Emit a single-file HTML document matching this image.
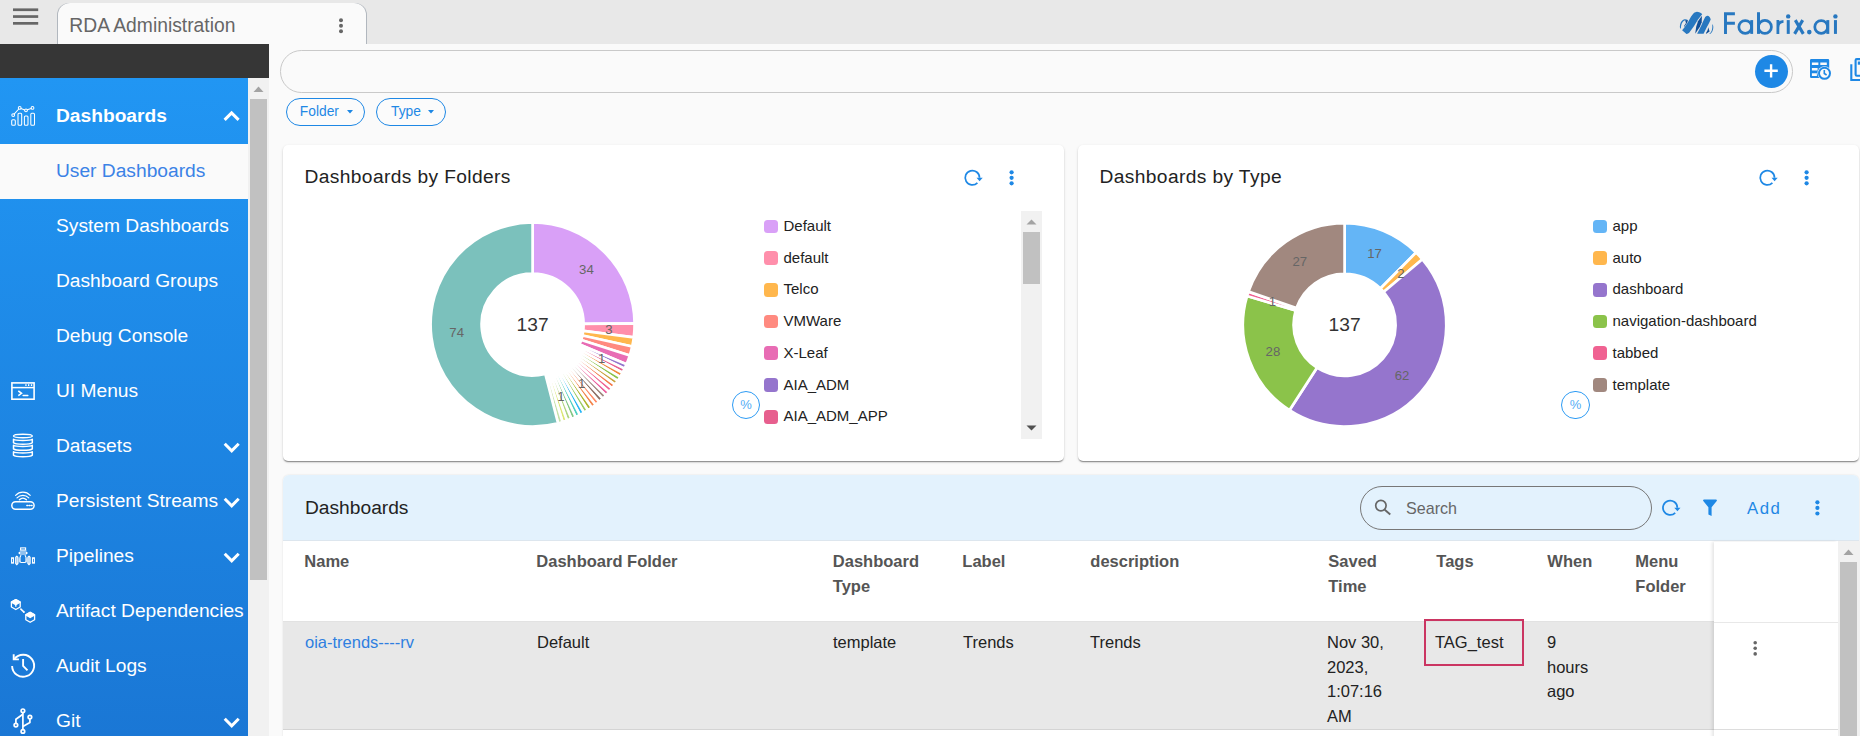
<!DOCTYPE html>
<html><head><meta charset="utf-8"><title>RDA Administration</title>
<style>
*{box-sizing:border-box;margin:0;padding:0}
html,body{width:1860px;height:736px;overflow:hidden;background:#fafafa;font-family:"Liberation Sans",sans-serif;color:#222}
body{position:relative}
.abs{position:absolute}
#topbar{left:0;top:0;width:1860px;height:44px;background:#e8e8e8}
#tab{left:58px;top:3px;width:307.6px;height:41px;background:#fafafa;border-radius:12px 12px 0 0;box-shadow:-1px 0 0 rgba(110,125,140,.45),1px 0 0 rgba(110,125,140,.45)}
#tab span{position:absolute;left:11.3px;top:11.8px;font-size:19.3px;color:#666;white-space:nowrap;line-height:22px}
#dark{left:0;top:44px;width:269px;height:34px;background:#363636}
#side{left:0;top:78px;width:248px;height:658px;background:linear-gradient(#2196f3,#1a77d5)}
#sidescroll{left:248px;top:78px;width:20.6px;height:658px;background:#f1f1f1}
#sidescroll b{position:absolute;left:2px;top:21px;width:17px;height:480.6px;background:#c1c1c1}
.mi{position:absolute;left:56px;font-size:19.2px;color:#fff;white-space:nowrap;line-height:22px}
.lg{position:absolute;font-size:15px;line-height:20px;color:#222;white-space:nowrap;padding-left:19.5px}
.lg i{position:absolute;left:0;top:3.7px;width:14px;height:13.7px;border-radius:3.5px}
.card{position:absolute;background:#fff;border-radius:5px;box-shadow:0 2px 1.5px -1px rgba(0,0,0,.3),0 1px 1px 0 rgba(0,0,0,.16),0 1px 3px 0 rgba(0,0,0,.12)}
.ct{position:absolute;left:21.5px;top:21px;font-size:19.2px;letter-spacing:.38px;line-height:22px;color:#222;white-space:nowrap}
.chip{position:absolute;top:97.7px;height:28.2px;border:1px solid #1e88e5;border-radius:15px;color:#1e88e5;font-size:13.8px;line-height:25px;padding-left:12.8px;background:#fbfbfb}
.pct{position:absolute;width:28.2px;height:28.2px;border:1.2px solid #2d9bf4;border-radius:50%;color:#55acf5;font-size:13px;line-height:26px;text-align:center;background:#fff}
.th{position:absolute;margin-left:-.7px;top:548.5px;font-size:16.5px;font-weight:bold;color:#555;line-height:25px}
.td{position:absolute;top:630px;font-size:16.5px;color:#222;line-height:24.7px}
</style></head><body>

<!-- top bar -->
<div id="topbar" class="abs"></div>
<svg class="abs" style="left:0;top:0" width="50" height="44"><g fill="#666"><rect x="13" y="8.4" width="25.2" height="2.7"/><rect x="13" y="15.2" width="25.2" height="2.7"/><rect x="13" y="22" width="25.2" height="2.7"/></g></svg>
<div id="tab" class="abs"><span>RDA Administration</span>
<svg class="abs" style="left:275px;top:13px" width="16" height="22"><g fill="#666"><circle cx="8" cy="4.2" r="2"/><circle cx="8" cy="9.700" r="2"/><circle cx="8" cy="15.200" r="2"/></g></svg></div>

<!-- logo -->
<svg class="abs" style="left:0;top:0" width="1860" height="44">
<g fill="#2878c0">
<path d="M1682.1 30.200L1686.500 33.900Q1688 34 1689.200 32.800L1693.900 26.300L1698 19.400L1702.200 14.300Q1701.500 12.900 1699.900 12.500Q1697.800 11.700 1696.200 11.900Q1694.400 12.200 1693.400 13.400L1691.100 16.600L1687.900 22.200L1684.200 27.700Z"/>
<path d="M1697.100 33.700H1703.600L1706.300 28.200L1709.100 23.100L1710.700 19.600Q1710.500 17.900 1709.600 16.900Q1708.500 15.700 1707.300 15.800Q1706 16 1705.200 17.100L1703.600 20.300L1701.300 25.400L1698.500 30.900Z"/>
<path d="M1680.200 28.600Q1679.600 26.500 1680.100 24.400Q1680.700 22 1682 20.700Q1683.200 19.500 1684.600 19.200Q1686.200 19 1687.900 19.900L1685.100 20.300Q1683.500 20.900 1682.500 22.200Q1681.500 23.600 1681.200 25.400Q1680.900 27 1680.900 28.600Z"/>
<path d="M1712.600 24.200Q1713.500 25.800 1713.300 27.700Q1713.100 29.700 1712.300 31.400Q1711.500 32.900 1710.500 33.700H1709.100Q1710.200 33.100 1710.900 32.300Q1711.800 30.900 1712.100 29.100Q1712.500 26.800 1712.300 24.500Z"/>
</g>
<g fill="#114f97">
<path d="M1701.900 15.700L1698 21.200L1696.200 26.800L1695.200 33.700L1699.900 26.800L1701.700 22.200Z"/>
<path d="M1685.100 20.300L1687.900 20.100L1687.400 22.200L1684.400 26.800L1683.900 26.300L1686 23.100Z"/>
<path d="M1708.200 27.200L1709.600 31.400L1706.300 33.700L1705.900 33.300L1707.700 30Z"/>
</g>
<g fill="none" stroke="#2878c0">
<path d="M1725.500 33.900V12.200M1724 13.650H1734.900M1725 23.300H1734.900" stroke-width="2.950"/>
<circle cx="1745.250" cy="26.900" r="6.400" stroke-width="2.750"/>
<path d="M1751.700 20.100V33.900" stroke-width="2.850"/>
<path d="M1758.500 12.200V33.900" stroke-width="2.950"/>
<circle cx="1764.900" cy="26.900" r="6.500" stroke-width="2.750"/>
<path d="M1777.900 20.100V33.900M1777.900 27.500Q1778 21.700 1783.500 21.400" stroke-width="2.800"/>
<path d="M1788.250 20.100V33.900" stroke-width="3"/>
<path d="M1795.300 20.100L1803.300 33.900M1802.700 20.100L1794.600 33.900" stroke-width="3.100"/>
<circle cx="1821.200" cy="26.900" r="6.400" stroke-width="2.750"/>
<path d="M1827.800 20.100V33.900" stroke-width="2.950"/>
<path d="M1835.450 20.100V33.900" stroke-width="3"/>
</g>
<g fill="#2878c0"><circle cx="1788.200" cy="16.400" r="2.200"/><circle cx="1809.300" cy="32.100" r="2.300"/><circle cx="1835.400" cy="16.400" r="2.200"/></g>
</svg>

<!-- dark bar + sidebar -->
<div id="dark" class="abs"></div>
<div id="side" class="abs">
 <div class="abs" style="left:0;top:66px;width:248px;height:55px;background:#fafafa"></div>
 <div class="mi" style="top:26.6px;font-weight:bold">Dashboards</div>
 <div class="mi" style="top:81.6px;color:#3b82e6">User Dashboards</div>
 <div class="mi" style="top:136.6px">System Dashboards</div>
 <div class="mi" style="top:191.6px">Dashboard Groups</div>
 <div class="mi" style="top:246.6px">Debug Console</div>
 <div class="mi" style="top:301.6px">UI Menus</div>
 <div class="mi" style="top:356.6px">Datasets</div>
 <div class="mi" style="top:411.6px">Persistent Streams</div>
 <div class="mi" style="top:466.6px">Pipelines</div>
 <div class="mi" style="top:521.6px">Artifact Dependencies</div>
 <div class="mi" style="top:576.6px">Audit Logs</div>
 <div class="mi" style="top:631.6px">Git</div>
 <svg class="abs" style="left:0;top:0" width="248" height="658" fill="none" stroke="#fff">
  <!-- chevrons -->
  <path d="M224.6 41.9l7-7 7 7" stroke-width="3"/>
  <g stroke-width="3"><path d="M224.7 365.800l7 7 7-7"/><path d="M224.700 420.800l7 7 7-7"/><path d="M224.700 475.800l7 7 7-7"/><path d="M224.700 640.800l7 7 7-7"/></g>
 </svg>
</div>
<div id="sidescroll" class="abs"><b></b>
<svg class="abs" style="left:0;top:0" width="21" height="21"><path d="M5.5 14l5-5.5 5 5.5z" fill="#a3a3a3"/></svg></div>

<!-- search row -->
<div class="abs" style="left:280px;top:50px;width:1513px;height:42.6px;border:1px solid #c9c9c9;border-radius:21.3px;background:#fafafa"></div>
<div class="abs" style="left:1755px;top:55px;width:33px;height:33px;border-radius:50%;background:#1e88e5"></div>
<svg class="abs" style="left:1755px;top:55px" width="33" height="33"><path d="M16.1 9.2v13.2M9.4 15.8h13.4" stroke="#fff" stroke-width="2.4"/></svg>

<div class="chip" style="left:286px;width:79px">Folder</div>
<div class="chip" style="left:376px;width:70px;padding-left:14px">Type</div>
<svg class="abs" style="left:280px;top:97px" width="180" height="29"><path d="M67 13h6l-3 3.4zM148 13h6l-3 3.4z" fill="#1e88e5"/></svg>

<!-- cards -->
<div class="card" style="left:283px;top:145px;width:781px;height:316px"><div class="ct">Dashboards by Folders</div></div>
<div class="card" style="left:1078px;top:145px;width:781px;height:316px"><div class="ct">Dashboards by Type</div></div>

<!-- legend scroll box -->
<div class="abs" style="left:1021px;top:211px;width:21px;height:228px;background:#f1f1f1"></div>
<div class="abs" style="left:1023px;top:232px;width:17px;height:52px;background:#c1c1c1"></div>
<svg class="abs" style="left:1021px;top:211px" width="21" height="228"><path d="M5.5 13.5l5-5 5 5z" fill="#a3a3a3"/><path d="M5.5 214.5l5 5 5-5z" fill="#505050"/></svg>

<div class="lg" style="left:764px;top:216.0px"><i style="background:#d9a0f7"></i>Default</div><div class="lg" style="left:764px;top:247.7px"><i style="background:#ff8fab"></i>default</div><div class="lg" style="left:764px;top:279.4px"><i style="background:#ffb74d"></i>Telco</div><div class="lg" style="left:764px;top:311.1px"><i style="background:#ff8a80"></i>VMWare</div><div class="lg" style="left:764px;top:342.8px"><i style="background:#e86cb4"></i>X-Leaf</div><div class="lg" style="left:764px;top:374.5px"><i style="background:#9575cd"></i>AIA_ADM</div><div class="lg" style="left:764px;top:406.2px"><i style="background:#e75f8e"></i>AIA_ADM_APP</div>
<div class="lg" style="left:1593px;top:216.0px"><i style="background:#64b5f6"></i>app</div><div class="lg" style="left:1593px;top:247.7px"><i style="background:#ffb74d"></i>auto</div><div class="lg" style="left:1593px;top:279.4px"><i style="background:#9575cd"></i>dashboard</div><div class="lg" style="left:1593px;top:311.1px"><i style="background:#8bc34a"></i>navigation-dashboard</div><div class="lg" style="left:1593px;top:342.8px"><i style="background:#f06292"></i>tabbed</div><div class="lg" style="left:1593px;top:374.5px"><i style="background:#a1887f"></i>template</div>
<div class="pct" style="left:731.9px;top:390.700px">%</div>
<div class="pct" style="left:1561.4px;top:390.700px">%</div>

<svg class="abs" style="left:0;top:0;font-family:'Liberation Sans',sans-serif" width="1860" height="736">
<g stroke="#fff" stroke-width="2.7" stroke-linejoin="bevel"><path d="M532.60 222.50A102 102 0 0 1 634.59 323.33L583.60 323.92A51 51 0 0 0 532.60 273.50Z" fill="#d9a0f7"/><path d="M634.59 323.33A102 102 0 0 1 633.79 337.33L583.19 330.92A51 51 0 0 0 583.60 323.92Z" fill="#ff8fab"/><path d="M633.79 337.33A102 102 0 0 1 632.19 346.55L582.39 335.52A51 51 0 0 0 583.19 330.92Z" fill="#ffb74d"/><path d="M632.19 346.55A102 102 0 0 1 629.75 355.57L581.18 340.04A51 51 0 0 0 582.39 335.52Z" fill="#ff8a80"/><path d="M629.75 355.57A102 102 0 0 1 626.50 364.34L579.55 344.42A51 51 0 0 0 581.18 340.04Z" fill="#e86cb4"/><path d="M626.50 364.34A102 102 0 0 1 624.57 368.61L578.59 346.55A51 51 0 0 0 579.55 344.42Z" fill="#9575cd"/><path d="M624.57 368.61A102 102 0 0 1 622.45 372.78L577.53 348.64A51 51 0 0 0 578.59 346.55Z" fill="#e75f8e"/><path d="M622.45 372.78A102 102 0 0 1 620.14 376.84L576.37 350.67A51 51 0 0 0 577.53 348.64Z" fill="#ef8a3c"/><path d="M620.14 376.84A102 102 0 0 1 617.65 380.80L575.13 352.65A51 51 0 0 0 576.37 350.67Z" fill="#8bc34a"/><path d="M617.65 380.80A102 102 0 0 1 614.98 384.64L573.79 354.57A51 51 0 0 0 575.13 352.65Z" fill="#c9a13b"/><path d="M614.98 384.64A102 102 0 0 1 612.14 388.36L572.37 356.43A51 51 0 0 0 573.79 354.57Z" fill="#f4794a"/><path d="M612.14 388.36A102 102 0 0 1 609.13 391.94L570.86 358.22A51 51 0 0 0 572.37 356.43Z" fill="#f06292"/><path d="M609.13 391.94A102 102 0 0 1 605.95 395.37L569.28 359.94A51 51 0 0 0 570.86 358.22Z" fill="#ec5f9d"/><path d="M605.95 395.37A102 102 0 0 1 602.63 398.66L567.61 361.58A51 51 0 0 0 569.28 359.94Z" fill="#a1887f"/><path d="M602.63 398.66A102 102 0 0 1 599.15 401.79L565.88 363.15A51 51 0 0 0 567.61 361.58Z" fill="#8d6e63"/><path d="M599.15 401.79A102 102 0 0 1 595.54 404.76L564.07 364.63A51 51 0 0 0 565.88 363.15Z" fill="#ff8a65"/><path d="M595.54 404.76A102 102 0 0 1 591.79 407.57L562.20 366.03A51 51 0 0 0 564.07 364.63Z" fill="#f4844a"/><path d="M591.79 407.57A102 102 0 0 1 587.92 410.19L560.26 367.35A51 51 0 0 0 562.20 366.03Z" fill="#afb42b"/><path d="M587.92 410.19A102 102 0 0 1 583.94 412.64L558.27 368.57A51 51 0 0 0 560.26 367.35Z" fill="#9ccc65"/><path d="M583.94 412.64A102 102 0 0 1 579.84 414.90L556.22 369.70A51 51 0 0 0 558.27 368.57Z" fill="#29b6f6"/><path d="M579.84 414.90A102 102 0 0 1 575.65 416.97L554.12 370.74A51 51 0 0 0 556.22 369.70Z" fill="#4dd0c1"/><path d="M575.65 416.97A102 102 0 0 1 571.36 418.85L551.98 371.67A51 51 0 0 0 554.12 370.74Z" fill="#81c784"/><path d="M571.36 418.85A102 102 0 0 1 567.00 420.53L549.80 372.51A51 51 0 0 0 551.98 371.67Z" fill="#aed581"/><path d="M567.00 420.53A102 102 0 0 1 562.56 422.00L547.58 373.25A51 51 0 0 0 549.80 372.51Z" fill="#dce775"/><path d="M562.56 422.00A102 102 0 0 1 558.06 423.27L545.33 373.89A51 51 0 0 0 547.58 373.25Z" fill="#c5e1a5"/><path d="M558.06 423.27A102 102 0 1 1 532.60 222.50L532.60 273.50A51 51 0 1 0 545.33 373.89Z" fill="#7bc1bc"/></g><text x="586.4" y="273.5" text-anchor="middle" font-size="13.2" fill="#666">34</text><text x="609.0" y="333.6" text-anchor="middle" font-size="13.2" fill="#666">3</text><text x="601.7" y="362.5" text-anchor="middle" font-size="13.2" fill="#666">1</text><text x="581.7" y="387.8" text-anchor="middle" font-size="13.2" fill="#666">1</text><text x="561.0" y="400.7" text-anchor="middle" font-size="13.2" fill="#666">1</text><text x="456.7" y="337.3" text-anchor="middle" font-size="13.2" fill="#666">74</text>
<g stroke="#fff" stroke-width="2.7" stroke-linejoin="bevel"><path d="M1344.60 223.10A101.7 101.7 0 0 1 1416.10 252.48L1380.46 288.53A51 51 0 0 0 1344.60 273.80Z" fill="#64b5f6"/><path d="M1416.10 252.48A101.7 101.7 0 0 1 1422.42 259.33L1383.63 291.97A51 51 0 0 0 1380.46 288.53Z" fill="#ffb74d"/><path d="M1422.42 259.33A101.7 101.7 0 0 1 1289.44 410.24L1316.94 367.65A51 51 0 0 0 1383.63 291.97Z" fill="#9575cd"/><path d="M1289.44 410.24A101.7 101.7 0 0 1 1247.05 296.05L1295.68 310.38A51 51 0 0 0 1316.94 367.65Z" fill="#8bc34a"/><path d="M1247.05 296.05A101.7 101.7 0 0 1 1248.47 291.60L1296.39 308.15A51 51 0 0 0 1295.68 310.38Z" fill="#f06292"/><path d="M1248.47 291.60A101.7 101.7 0 0 1 1344.60 223.10L1344.60 273.80A51 51 0 0 0 1296.39 308.15Z" fill="#a1887f"/></g><text x="1374.5" y="258.0" text-anchor="middle" font-size="13.2" fill="#666">17</text><text x="1400.8" y="277.7" text-anchor="middle" font-size="13.2" fill="#666">2</text><text x="1402.0" y="379.6" text-anchor="middle" font-size="13.2" fill="#666">62</text><text x="1272.9" y="355.6" text-anchor="middle" font-size="13.2" fill="#666">28</text><text x="1272.5" y="305.5" text-anchor="middle" font-size="13.2" fill="#666">1</text><text x="1299.8" y="265.6" text-anchor="middle" font-size="13.2" fill="#666">27</text>
<text x="532.6" y="330.7" text-anchor="middle" font-size="19.2" fill="#333">137</text>
<text x="1344.6" y="330.7" text-anchor="middle" font-size="19.2" fill="#333">137</text>
</svg>

<!-- table card -->
<div class="abs" style="left:283px;top:475px;width:1576px;height:271px;background:#fff;border-radius:6px 6px 0 0;box-shadow:0 0 2px rgba(0,0,0,.12)"></div>
<div class="abs" style="left:283px;top:475px;width:1576px;height:66px;background:#e3f2fd;border-radius:6px 6px 0 0;border-bottom:1px solid #dde6ee"></div>
<div class="abs" style="left:305px;top:497px;font-size:19.2px;line-height:22px;color:#222">Dashboards</div>
<div class="abs" style="left:1360px;top:486px;width:292px;height:44px;border:1px solid #777;border-radius:22px"></div>
<div class="abs" style="left:1406px;top:498px;font-size:16.100px;line-height:20px;color:#666">Search</div>
<div class="abs" style="left:1747px;top:498px;font-size:16.8px;line-height:22px;color:#1e88e5;letter-spacing:1.5px">Add</div>

<!-- header row -->
<div class="th" style="left:305px">Name</div>
<div class="th" style="left:537px">Dashboard Folder</div>
<div class="th" style="left:833.5px">Dashboard<br>Type</div>
<div class="th" style="left:963px">Label</div>
<div class="th" style="left:1091px">description</div>
<div class="th" style="left:1329px">Saved<br>Time</div>
<div class="th" style="left:1437px">Tags</div>
<div class="th" style="left:1548px">When</div>
<div class="th" style="left:1636px">Menu<br>Folder</div>

<!-- data row -->
<div class="abs" style="left:283px;top:622px;width:1431px;height:108px;background:#e8e8e8;border-bottom:1px solid #d4d4d4"></div>
<div class="abs" style="left:283px;top:621px;width:1431px;height:1px;background:#e2e2e2"></div>
<div class="abs" style="left:1714px;top:542px;width:124px;height:200px;background:#fff;box-shadow:-2px 0 3px rgba(0,0,0,.1)"></div>
<div class="abs" style="left:1714px;top:622px;width:124px;height:1px;background:#e8e8e8"></div>
<div class="abs" style="left:1714px;top:729px;width:124px;height:1px;background:#ddd"></div>
<div class="td" style="left:305px;color:#2f7fe0">oia-trends----rv</div>
<div class="td" style="left:537px">Default</div>
<div class="td" style="left:833px">template</div>
<div class="td" style="left:963px">Trends</div>
<div class="td" style="left:1090px">Trends</div>
<div class="td" style="left:1327px">Nov 30,<br>2023,<br>1:07:16<br>AM</div>
<div class="td" style="left:1435px">TAG_test</div>
<div class="td" style="left:1547px">9<br>hours<br>ago</div>
<div class="abs" style="left:1424px;top:619px;width:100px;height:47px;border:2.5px solid #cb3562"></div>

<!-- table scrollbar -->
<div class="abs" style="left:1838px;top:541px;width:22px;height:195px;background:#f1f1f1"></div>
<div class="abs" style="left:1840px;top:562px;width:17px;height:174px;background:#c1c1c1"></div>
<svg class="abs" style="left:1838px;top:541px" width="22" height="21"><path d="M5.5 14l5-5.5 5 5.5z" fill="#a3a3a3"/></svg>

<!-- icon overlay -->
<svg class="abs" id="icons" style="left:0;top:0" width="1860" height="736" fill="none">
<!-- ===== sidebar icons (white) ===== -->
<g stroke="#fff" stroke-width="1.05" fill="none" stroke-linejoin="round" stroke-linecap="round">
 <!-- dashboards: bars + line -->
 <rect x="11.7" y="119.8" width="3.6" height="5.4" rx="1"/>
 <rect x="18" y="113.3" width="3.7" height="11.9" rx="1"/>
 <rect x="24.4" y="116" width="3.6" height="9.2" rx="1"/>
 <rect x="30.8" y="113.3" width="3.7" height="11.9" rx="1"/>
 <path d="M14.1 114.2L18.8 109M20.9 108.5L24.8 109.9M27.2 109.8L31.3 108.4"/>
 <circle cx="13.2" cy="115.1" r="1.4"/><circle cx="19.7" cy="107.9" r="1.4"/><circle cx="26" cy="110.3" r="1.4"/><circle cx="32.5" cy="107.9" r="1.4"/>
</g>
<g stroke="#fff" fill="none">
 <!-- UI menus: terminal window -->
 <rect x="11.9" y="382.9" width="22.2" height="16.3" stroke-width="1.6"/>
 <path d="M11.9 387.6H34.1" stroke-width="1.5"/>
 <path d="M25.3 385.1h1.3M28 385.1h1.3M30.9 385.1h1.3" stroke-width="1.7"/>
 <path d="M18.3 390.9L21.5 393.3L18.3 395.6" stroke-width="1.6"/>
 <path d="M23.1 395.4H27.8" stroke-width="1.5" stroke-linecap="round"/>
</g>
<g stroke="#fff" stroke-width="1.5" fill="none" stroke-linejoin="round">
 <!-- datasets: database -->
 <ellipse cx="22.9" cy="436" rx="9.4" ry="1.7"/>
 <path d="M13.5 439.2c2 1.7 16.8 1.7 18.8 0v3.6c-2 1.9-16.800 1.900-18.8 0z"/>
 <path d="M13.500 445.300c2 1.7 16.8 1.7 18.8 0v3.600c-2 1.9-16.8 1.9-18.8 0z"/>
 <path d="M13.5 451.7c2 1.7 16.800 1.700 18.8 0v3.600c-2 2-16.8 2-18.8 0z"/>
</g>
<g stroke="#fff" fill="none" stroke-linecap="round">
 <!-- persistent streams: router -->
 <rect x="11.8" y="501.7" width="22.3" height="7.6" rx="3.8" stroke-width="1.5"/>
 <path d="M26.8 505.5h.9M29 505.500h.9M31.2 505.5h.9" stroke-width="1.3"/>
 <path d="M15.6 495.3c4-4.200 10.600-4.200 14.600 0" stroke-width="1.2"/>
 <path d="M17 497.900c3.400-3.300 8.400-3.300 11.800 0" stroke-width="1.2"/>
 <path d="M19.300 499.800c2.100-2 5.100-2 7.200 0" stroke-width="1.2"/>
</g>
<g stroke="#fff" stroke-width="1.1" fill="none">
 <!-- pipelines -->
 <rect x="11.600" y="557.8" width="1.900" height="5.3"/>
 <rect x="32.500" y="557.8" width="1.900" height="5.300"/>
 <path d="M16.8 556.2l1.100 1.100v6.200l-1.100 1.100l-1.100-1.100v-6.200z" fill="rgba(255,255,255,.5)"/>
 <path d="M29 556.2l1.100 1.100v6.200l-1.100 1.100l-1.100-1.100v-6.200z" fill="rgba(255,255,255,.5)"/>
 <rect x="20.600" y="547.900" width="5" height="2.100"/>
 <rect x="19.6" y="550.3" width="7" height="4.700" fill="rgba(255,255,255,.5)" stroke="none"/>
 <path d="M19.4 551.900v2M26.700 551.900v2" stroke-width="1.500"/>
 <path d="M21 555.100l-1 2.300v4.400l1 .7h4l1-.7v-4.400l-1-2.300" />
 <rect x="21" y="557.400" width="3.900" height="4.400" stroke="none" fill="none"/>
 <path d="M18.500 558.300h1.500v4.300h-1.500zM25.900 558.300h1.500v4.300h-1.500z" fill="rgba(255,255,255,.45)" stroke="none"/>
</g>
<g stroke="#fff" stroke-width="1.300" fill="none" stroke-linejoin="round">
 <!-- artifact dependencies: two cubes -->
 <path d="M15.800 599.600l4.400 2.500v4.900l-4.400 2.500l-4.400-2.500v-4.900z"/>
 <path d="M15.800 599.600l4.400 2.500l-4.400 2.600l-4.400-2.600z" fill="#fff"/>
 <path d="M15.800 604.700v2" />
 <path d="M30.200 612.400l4.400 2.500v4.900l-4.400 2.500l-4.400-2.500v-4.900z"/>
 <path d="M30.200 612.400l4.400 2.500l-4.400 2.600l-4.400-2.600z" fill="#fff"/>
 <path d="M20.400 608.600l3.300 3.300" stroke-width="1.500"/>
 <circle cx="23.900" cy="612.100" r="1" fill="#fff" stroke="none"/>
</g>
<g stroke="#fff" stroke-width="1.900" fill="none">
 <!-- audit logs: history -->
 <path d="M14.400 659A11 11 0 1 1 12.100 665.900"/>
 <path d="M13.700 654.200V659.400H18.900"/>
 <path d="M23.100 658.900V665.900L27.500 670.300"/>
</g>
<g stroke="#fff" stroke-width="1.700" fill="none" stroke-linejoin="round">
 <!-- git -->
 <path d="M22.900 712.700V729.500"/>
 <circle cx="22.900" cy="710.800" r="1.800"/>
 <circle cx="22.900" cy="731.400" r="1.800"/>
 <circle cx="15.900" cy="725.100" r="1.800"/>
 <circle cx="29.900" cy="717.100" r="1.800"/>
 <path d="M22.900 714.200L15.900 719.300V723.300"/>
 <path d="M29.900 719V722.600L22.900 726.500"/>
</g>

<!-- ===== toolbar icons (blue) ===== -->
<g fill="#1e88e5">
 <!-- table w/ clock -->
 <path fill-rule="evenodd" d="M1811.200 59h16.800a1.200 1.200 0 0 1 1.200 1.200v16.600a1.200 1.200 0 0 1 -1.200 1.200h-16.800a1.200 1.200 0 0 1 -1.200-1.200v-16.600a1.200 1.200 0 0 1 1.200-1.200zM1811.900 62.500v2.500h6.500v-2.500zM1820.300 62.500v2.500h6.500v-2.500zM1811.900 68v2.600h5.700v-2.600zM1811.900 73.300v2.700h5v-2.700zM1820.300 68v2.600h6.500v-2.600z"/>
 <circle cx="1824.500" cy="73.300" r="7" fill="#fafafa"/>
 <circle cx="1824.500" cy="73.300" r="5.500" fill="none" stroke="#1e88e5" stroke-width="2"/>
 <path d="M1824.300 69.900v3.600l2.300 1.500" fill="none" stroke="#1e88e5" stroke-width="1.600"/>
 <!-- copy (cut off) -->
 <path d="M1851.300 64.200V80H1862" fill="none" stroke="#1e88e5" stroke-width="2.100"/>
 <path d="M1862 59.100H1856.800a1.200 1.200 0 0 0 -1.200 1.200V74.500a1.200 1.200 0 0 0 1.200 1.200H1862" fill="none" stroke="#1e88e5" stroke-width="2.100"/>
 <rect x="1857.800" y="61.500" width="4" height="3.200"/>
</g>

<!-- refresh + kebab in cards -->
<g id="rf" fill="none" stroke="#1e88e5" stroke-width="1.750">
 <path d="M979.500 177.700A7.150 7.150 0 1 0 977.400 182.800"/>
 <path d="M976.500 177.700h6.200l-3.100 3.600z" fill="#1e88e5" stroke="none"/>
</g>
<g fill="#1e88e5"><circle cx="1011.600" cy="172.300" r="2.100"/><circle cx="1011.600" cy="177.800" r="2.100"/><circle cx="1011.600" cy="183.300" r="2.100"/></g>
<g fill="none" stroke="#1e88e5" stroke-width="1.750" transform="translate(795 0)">
 <path d="M979.500 177.700A7.150 7.150 0 1 0 977.400 182.800"/>
 <path d="M976.500 177.700h6.200l-3.100 3.600z" fill="#1e88e5" stroke="none"/>
</g>
<g fill="#1e88e5" transform="translate(795 0)"><circle cx="1011.600" cy="172.300" r="2.100"/><circle cx="1011.600" cy="177.800" r="2.100"/><circle cx="1011.600" cy="183.300" r="2.100"/></g>

<!-- table header icons -->
<g fill="none" stroke="#666" stroke-width="1.700"><circle cx="1380.900" cy="505.600" r="5.200"/><path d="M1384.700 509.700L1390.300 514.400" stroke-width="1.900"/></g>
<g fill="none" stroke="#1e88e5" stroke-width="1.750" transform="translate(697.800 330)">
 <path d="M979.500 177.700A7.150 7.150 0 1 0 977.400 182.800"/>
 <path d="M976.500 177.700h6.200l-3.100 3.600z" fill="#1e88e5" stroke="none"/>
</g>
<path d="M1703 499.400h13a.9 .9 0 0 1 .7 1.500l-5.100 6.300v8.800l-3.200-1.600v-7.200l-5.100-6.300a.9 .9 0 0 1 .7-1.500z" fill="#1e88e5"/>
<g fill="#1e88e5"><circle cx="1817.400" cy="502.300" r="2.100"/><circle cx="1817.400" cy="507.900" r="2.100"/><circle cx="1817.400" cy="513.500" r="2.100"/></g>
<g fill="#666"><circle cx="1755.200" cy="642.700" r="1.800"/><circle cx="1755.200" cy="648.300" r="1.800"/><circle cx="1755.200" cy="653.900" r="1.800"/></g>
</svg>
</body></html>
